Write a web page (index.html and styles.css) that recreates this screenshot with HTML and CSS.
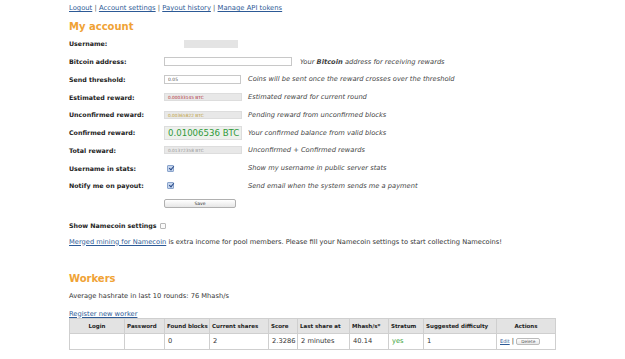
FILE: index.html
```html
<!DOCTYPE html>
<html lang="en">
<head>
  <meta charset="UTF-8">
  <meta name="viewport" content="width=device-width, initial-scale=1.0">
  <title>My account</title>
  <link rel="stylesheet" href="styles.css">
</head>
<body>

  <div class="page">
    <nav class="top-links">
      <a href="#">Logout</a> | <a href="#">Account settings</a> | <a href="#">Payout history</a> | <a href="#">Manage API tokens</a>
    </nav>

    <h2 class="section-title">My account</h2>

    <form class="account">
      <div class="row">
        <label class="row-label">Username:</label>
        <span class="field"><span class="username-box"><span class="username-hidden"></span></span></span>
      </div>
      <div class="row">
        <label class="row-label">Bitcoin address:</label>
        <input class="text-input wide" type="text" value="">
        <span class="desc">Your <b>Bitcoin</b> address for receiving rewards</span>
      </div>
      <div class="row">
        <label class="row-label">Send threshold:</label>
        <span class="field"><input class="text-input" type="text" value="0.05"></span>
        <span class="desc">Coins will be sent once the reward crosses over the threshold</span>
      </div>
      <div class="row">
        <label class="row-label">Estimated reward:</label>
        <span class="field"><span class="readonly estimated">0.00033145 BTC</span></span>
        <span class="desc">Estimated reward for current round</span>
      </div>
      <div class="row">
        <label class="row-label">Unconfirmed reward:</label>
        <span class="field"><span class="readonly unconfirmed">0.00365822 BTC</span></span>
        <span class="desc">Pending reward from unconfirmed blocks</span>
      </div>
      <div class="row">
        <label class="row-label">Confirmed reward:</label>
        <span class="field"><span class="readonly confirmed">0.01006536 BTC</span></span>
        <span class="desc">Your confirmed balance from valid blocks</span>
      </div>
      <div class="row">
        <label class="row-label">Total reward:</label>
        <span class="field"><span class="readonly">0.01372358 BTC</span></span>
        <span class="desc">Unconfirmed + Confirmed rewards</span>
      </div>
      <div class="row">
        <label class="row-label">Username in stats:</label>
        <span class="field"><span class="check checked"></span></span>
        <span class="desc">Show my username in public server stats</span>
      </div>
      <div class="row">
        <label class="row-label">Notify me on payout:</label>
        <span class="field"><span class="check checked"></span></span>
        <span class="desc">Send email when the system sends me a payment</span>
      </div>
      <div class="row">
        <span class="row-label"></span>
        <button type="button" class="save-btn">Save</button>
      </div>

      <div class="namecoin-toggle">
        <b>Show Namecoin settings</b> <span class="check"></span>
      </div>
      <p class="namecoin-info"><a href="#">Merged mining for Namecoin</a> is extra income for pool members. Please fill your Namecoin settings to start collecting Namecoins!</p>
    </form>

    <h2 class="section-title workers-title">Workers</h2>
    <p class="hashrate">Average hashrate in last 10 rounds: 76 Mhash/s</p>
    <a class="register-link" href="#">Register new worker</a>

    <table class="workers">
      <thead>
        <tr>
          <th class="c-login">Login</th>
          <th class="c-pass">Password</th>
          <th class="c-found">Found blocks</th>
          <th class="c-shares">Current shares</th>
          <th class="c-score">Score</th>
          <th class="c-last">Last share at</th>
          <th class="c-mhash">Mhash/s*</th>
          <th class="c-stratum">Stratum</th>
          <th class="c-diff">Suggested difficulty</th>
          <th class="c-actions">Actions</th>
        </tr>
      </thead>
      <tbody>
        <tr>
          <td></td>
          <td></td>
          <td>0</td>
          <td>2</td>
          <td>2.3286</td>
          <td>2 minutes</td>
          <td>40.14</td>
          <td class="yes">yes</td>
          <td>1</td>
          <td><a class="edit-link" href="#">Edit</a> | <button type="button" class="delete-btn">Delete</button></td>
        </tr>
      </tbody>
    </table>
  </div>

</body>
</html>
```

FILE: styles.css
```css
body {
  margin: 0;
  padding: 0;
  background: #fff;
  color: #333;
  font-family: 'DejaVu Sans', Verdana, sans-serif;
  font-size: 6.7px;
}

.page {
  padding: 3px 0 0 69px;
}

a {
  color: #2d5a96;
}

.top-links {
  height: 10px;
  line-height: 10px;
  font-size: 6.8px;
  color: #555;
}

.section-title {
  margin: 0;
  font-size: 10px;
  line-height: 14px;
  color: #f0a235;
  padding-top: 7px;
}

/* 계정 폼 */
.account {
  margin: 1px 0 0;
}

.row {
  display: flex;
  align-items: center;
  height: 17.75px;
}

.row-label {
  width: 95px;
  flex: none;
  font-weight: bold;
  font-size: 6.3px;
  color: #222;
}

.field {
  width: 84px;
  flex: none;
  display: flex;
  align-items: center;
}

.desc {
  font-style: italic;
  color: #444;
  white-space: nowrap;
}

.text-input {
  box-sizing: border-box;
  width: 77px;
  height: 9px;
  padding: 0 3px;
  border: 1px solid #c8c8c8;
  font-family: inherit;
  font-size: 4.5px;
  color: #555;
  background: #fff;
}

.text-input.wide {
  width: 128px;
  margin-right: 8px;
}

.username-box {
  display: block;
  width: 74px;
  height: 8px;
  background: #e4e4e4;
}

.username-hidden {
  display: block;
  width: 20px;
  height: 8px;
  background: #fff;
}

.readonly {
  box-sizing: border-box;
  display: block;
  width: 78px;
  height: 8px;
  line-height: 7px;
  padding: 0 3px;
  background: #e8e8e8;
  border: 1px solid #ddd;
  font-size: 4.3px;
  color: #999;
  white-space: nowrap;
  overflow: hidden;
}

.readonly.estimated {
  color: #b3313a;
}

.readonly.unconfirmed {
  color: #c0a03a;
}

.readonly.confirmed {
  height: 14px;
  line-height: 12px;
  font-size: 8.6px;
  padding: 0 3px;
  color: #2f9a3a;
  background: #edf0ec;
}

.check {
  display: inline-block;
  box-sizing: border-box;
  width: 7px;
  height: 7px;
  margin-left: 3px;
  border: 1px solid #b8b8b8;
  border-radius: 1px;
  background: #fafafa;
  vertical-align: middle;
}

.check.checked {
  border-color: #8aa4cc;
  background: #c6d6ee;
  position: relative;
}

.check.checked::after {
  content: '';
  position: absolute;
  left: 1.5px;
  top: -1px;
  width: 2px;
  height: 4px;
  border: solid #2a4a88;
  border-width: 0 1.2px 1.2px 0;
  transform: rotate(40deg);
}

.save-btn {
  box-sizing: border-box;
  width: 72px;
  height: 9px;
  padding: 0;
  border: 1px solid #b0b0b0;
  border-radius: 2px;
  background: linear-gradient(#ffffff, #e6e6e6);
  font-family: inherit;
  font-size: 4.5px;
  color: #333;
}

.namecoin-toggle {
  margin-top: 8px;
  height: 10px;
  line-height: 10px;
  font-size: 6.3px;
  color: #222;
}

.namecoin-toggle .check {
  margin-left: 1px;
  width: 6px;
  height: 6px;
}

.namecoin-info {
  margin: 6px 0 0;
  line-height: 10px;
}

.workers-title {
  padding-top: 25px;
}

.hashrate {
  margin: 5px 0 0;
  line-height: 10px;
}

.register-link {
  display: block;
  margin-top: 9px;
  line-height: 8px;
}

/* 워커 테이블 */
.workers {
  border-collapse: collapse;
  width: 486px;
  table-layout: fixed;
  margin-top: 0;
}

.workers th,
.workers td {
  box-sizing: border-box;
  border: 1px solid #cfcfcf;
  padding: 0 2px;
  text-align: left;
  white-space: nowrap;
  overflow: hidden;
}

.workers th {
  height: 15px;
  background: #e3e3e3;
  font-weight: bold;
  color: #222;
  font-size: 5.5px;
}

.workers td {
  height: 16px;
  padding: 0 3px;
}

.workers .c-login,
.workers .c-actions {
  text-align: center;
}

.c-login { width: 55px; }
.c-pass { width: 40px; }
.c-found { width: 45px; }
.c-shares { width: 59px; }
.c-score { width: 29px; }
.c-last { width: 52px; }
.c-mhash { width: 39px; }
.c-stratum { width: 35px; }
.c-diff { width: 73px; }
.c-actions { width: 59px; }

.yes {
  color: #3aa33a;
}

.edit-link {
  font-size: 5px;
}

.delete-btn {
  height: 7px;
  padding: 0 4px;
  border: 1px solid #bbb;
  border-radius: 2px;
  background: linear-gradient(#fff, #e8e8e8);
  font-family: inherit;
  font-size: 4.3px;
  line-height: 5px;
  color: #555;
  vertical-align: middle;
}
```
